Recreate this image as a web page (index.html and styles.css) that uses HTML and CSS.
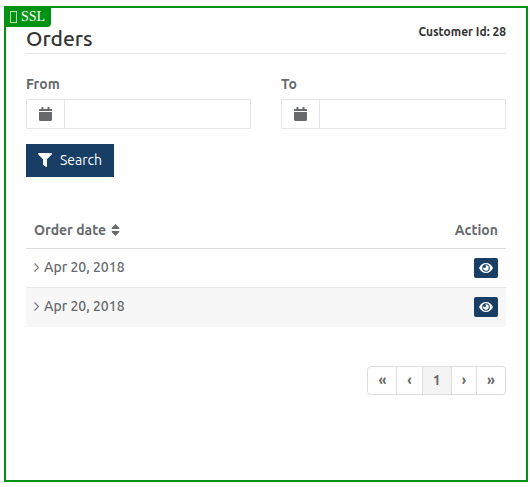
FILE: index.html
```html
<!DOCTYPE html>
<html lang="en">
<head>
<meta charset="utf-8">
<title>Orders</title>
<link rel="stylesheet" href="styles.css">
</head>
<body>
<svg class="sprite" aria-hidden="true">
  <symbol id="calendar" viewBox="0 0 13 14"><path d="M2.500 0h2v2h4V0h2v2H12q1 0 1 1v1H0V3q0-1 1-1h1.500zM0 5h13v7.500q0 1.500-1.500 1.500h-10Q0 14 0 12.500z"/></symbol>
  <symbol id="filter" viewBox="0 0 14 14"><path d="M.7 0h12.600q1.100.4.400 1.400L9 6.300V13q-.2 1.300-1.200.8L5.400 12Q5 11.700 5 11.200V6.300L.3 1.400Q-.4.400.7 0z"/></symbol>
  <symbol id="sort" viewBox="0 0 8 12"><path d="M4 0l3.800 4q.5 1-.6 1H.8Q-.3 5 .2 4zM4 12l3.800-4q.5-1-.6-1H.8q-1.100 0-.6 1z"/></symbol>
  <symbol id="chevron" viewBox="0 0 5 9"><path d="M.5.5l4 4-4 4" fill="none" stroke="currentColor" stroke-width="1.200"/></symbol>
  <symbol id="eye" viewBox="0 0 14 10"><path fill-rule="evenodd" d="M0 5Q2.500 0 7 0t7 5q-2.500 5-7 5T0 5zM7 1.200a3.800 3.800 0 1 0 0 7.600 3.800 3.800 0 0 0 0-7.600zM7 2.200a2.800 2.800 0 1 1-2.700 2q1.500 1.400 2.500 0 .5-1-.5-1.900z"/></symbol>
</svg>
<main class="frame">
  <div class="ssl"><span class="glyph"></span>SSL</div>
  <header class="header">
    <h1>Orders</h1>
    <span class="customer">Customer Id: 28</span>
  </header>
  <form class="filters">
    <div class="field">
      <label for="from">From</label>
      <div class="group"><span class="addon"><svg class="calendar"><use href="#calendar"/></svg></span><input id="from" type="text"></div>
    </div>
    <div class="field">
      <label for="to">To</label>
      <div class="group"><span class="addon"><svg class="calendar"><use href="#calendar"/></svg></span><input id="to" type="text"></div>
    </div>
    <button class="search" type="button"><svg class="filter"><use href="#filter"/></svg>Search</button>
  </form>
  <table class="orders">
    <thead>
      <tr><th scope="col">Order date <svg class="sort"><use href="#sort"/></svg></th><th scope="col" class="action">Action</th></tr>
    </thead>
    <tbody>
      <tr><td><svg class="chevron"><use href="#chevron"/></svg>Apr 20, 2018</td><td class="action"><button class="view" type="button" aria-label="View order"><svg class="eye"><use href="#eye"/></svg></button></td></tr>
      <tr><td><svg class="chevron"><use href="#chevron"/></svg>Apr 20, 2018</td><td class="action"><button class="view" type="button" aria-label="View order"><svg class="eye"><use href="#eye"/></svg></button></td></tr>
    </tbody>
  </table>
  <nav class="pagination" aria-label="Pages">
    <a href="#">«</a><a href="#">‹</a><a href="#" class="current" aria-current="page">1</a><a href="#">›</a><a href="#">»</a>
  </nav>
</main>
</body>
</html>
```
FILE: styles.css
```css
* { box-sizing: border-box; }
body {
  margin: 0;
  padding: 6px 2px 5px 4px;
  min-height: 100vh;
  display: flex;
  background: #fff;
  color: #676a6c;
  font: 500 14px/20px Ubuntu, "Noto Sans", sans-serif;
}
svg { fill: currentColor; flex: none; }
.sprite { position: absolute; width: 0; height: 0; }
.frame {
  position: relative;
  flex: 1;
  min-width: 0;
  padding: 16px 20px 20px;
  border: 2px solid #009313;
}
.ssl {
  position: absolute;
  top: -1px;
  left: -1px;
  display: flex;
  align-items: center;
  gap: 4px;
  padding: 0 6px 0 5px;
  border-radius: 0 0 4px 0;
  background: #009313;
  color: #fff;
  font: 14px/20px "Liberation Serif", serif;
}
.glyph { width: 7px; height: 12px; border: 1px solid #b2dfb8; }
.header {
  display: flex;
  justify-content: space-between;
  align-items: flex-start;
  border-bottom: 1px solid #e5e5e5;
}
h1 {
  margin: 0;
  padding-bottom: 1px;
  color: #333;
  font-size: 21px;
  line-height: 28px;
  font-weight: 500;
}
.customer {
  color: #333;
  font-size: 12px;
  line-height: 16px;
  font-weight: 600;
}
.filters {
  display: grid;
  grid-template-columns: minmax(0, 1fr) minmax(0, 1fr);
  gap: 15px 30px;
  padding: 20px 0 35px;
}
label { display: block; margin-bottom: 5px; font-weight: 600; }
.group { display: flex; height: 30px; border: 1px solid #e5e6e7; }
.addon {
  width: 38px;
  display: flex;
  align-items: center;
  justify-content: center;
  border-right: 1px solid #e5e6e7;
}
.calendar { width: 13px; height: 14px; }
input {
  flex: 1;
  min-width: 0;
  padding: 0 8px;
  border: 0;
  background: transparent;
  color: inherit;
  font: inherit;
}
button { border: 0; background: #183e66; color: #fff; font: inherit; }
.search {
  justify-self: start;
  display: flex;
  align-items: center;
  gap: 8px;
  height: 33px;
  padding: 0 12px 1px;
  font-weight: 400;
}
.filter { width: 14px; height: 14px; }
.orders { width: 100%; border-collapse: collapse; }
th, td { padding: 8px; text-align: left; font-weight: 500; }
th { height: 36px; border-bottom: 1px solid #ddd; font-weight: 600; }
td { height: 39px; padding: 7px 8px 9px; border-top: 1px solid #e7e7e7; }
tbody tr:nth-child(even) { background: #f7f7f7; }
.sort { width: 9px; height: 12px; margin-left: 2px; vertical-align: -1px; }
.chevron { width: 5px; height: 9px; margin-right: 5px; color: #777; }
.orders .action { text-align: right; }
.view {
  display: inline-flex;
  align-items: center;
  justify-content: center;
  width: 24px;
  height: 20px;
  padding: 0;
  border-radius: 2px;
  vertical-align: middle;
}
.eye { width: 14px; height: 10px; }
.pagination { display: flex; justify-content: flex-end; margin-top: 39px; }
.pagination a {
  height: 29px;
  padding: 4px 10px;
  border: 1px solid #ddd;
  border-left-width: 0;
  color: inherit;
  font-weight: 600;
  line-height: 19px;
  text-decoration: none;
}
.pagination a:first-child { border-left-width: 1px; border-radius: 4px 0 0 4px; }
.pagination a:last-child { border-radius: 0 4px 4px 0; }
.pagination .current { background: #f4f4f4; }
```
